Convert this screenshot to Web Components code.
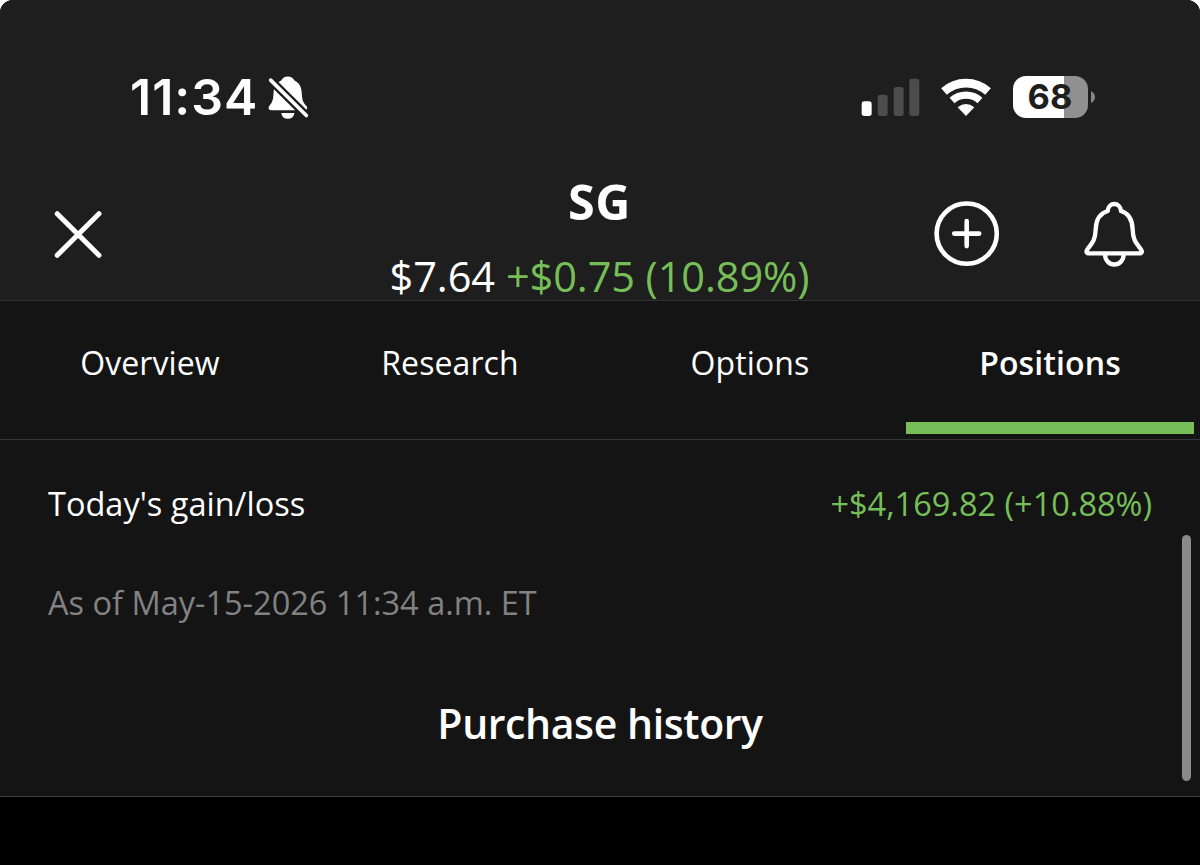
<!DOCTYPE html>
<html lang="en">
<head>
<meta charset="utf-8">
<title>SG Positions</title>
<style>
  body {
    margin: 0;
    background: #fff;
    font-family: 'Open Sans', 'Noto Sans', sans-serif;
    color: #fff;
  }
</style>
</head>
<body>
<phone-screen>
  <status-bar slot="header" time="11:34" battery="68"></status-bar>
  <quote-header slot="header">
    <span slot="symbol">SG</span>
    <span slot="price">$7.64</span>
    <span slot="change">+$0.75 (10.89%)</span>
  </quote-header>
  <nav-tabs slot="tabs">
    <nav-tab>Overview</nav-tab>
    <nav-tab>Research</nav-tab>
    <nav-tab>Options</nav-tab>
    <nav-tab selected>Positions</nav-tab>
  </nav-tabs>
  <position-panel>
    <detail-row>
      <span slot="label">Today's gain/loss</span>
      <span slot="value">+$4,169.82 (+10.88%)</span>
    </detail-row>
    <span slot="updated">As of May-15-2026 11:34 a.m. ET</span>
    <span slot="title">Purchase history</span>
  </position-panel>
</phone-screen>

<script>
class PhoneScreen extends HTMLElement {
  connectedCallback() {
    if (this.shadowRoot) return;
    this.attachShadow({ mode: 'open' }).innerHTML = `
      <style>
        :host {
          --green: #76bf58;
          --top: #1e1e1e;
          display: flex;
          flex-direction: column;
          width: 1200px;
          height: 865px;
          overflow: hidden;
          border-radius: 13px 13px 0 0;
          background: #000;
        }
        header {
          box-sizing: border-box;
          height: 301px;
          padding-top: 64px;
          background: var(--top);
          border-bottom: 1px solid #313131;
        }
      </style>
      <header><slot name="header"></slot></header>
      <slot name="tabs"></slot>
      <slot></slot>
    `;
  }
}

class StatusBar extends HTMLElement {
  connectedCallback() {
    if (this.shadowRoot) return;
    this.attachShadow({ mode: 'open' }).innerHTML = `
      <style>
        :host {
          display: flex;
          align-items: center;
          justify-content: space-between;
          height: 66px;
          padding: 0 105px 0 130px;
          font-family: Inter, 'Liberation Sans', sans-serif;
        }
        .side { display: flex; align-items: center; }
        svg { display: block; flex: none; }
        .time {
          width: 136px;
          font-size: 50px;
          font-weight: 600;
          line-height: 66px;
          letter-spacing: 1px;
        }
        .wifi { margin: 0 22px 0 20px; }
        .battery {
          width: 75px;
          height: 42px;
          border-radius: 13px;
          background: linear-gradient(90deg, #fff 68%, #909090 68%);
          color: #1e1e1e;
          font-size: 34.5px;
          font-weight: 700;
          line-height: 42px;
          text-align: center;
          text-indent: -1px;
        }
        .nub { margin-left: 3px; }
      </style>
      <div class="side">
        <span class="time">${this.getAttribute('time')}</span>
        <svg width="45" height="48" viewBox="440 40 136 144" aria-hidden="true">
          <path fill="#fff" d="M506 50C497 50 490 54 486 62C471 69 464 80 463 97C462 121 459 128 451 138C445 146 448 152 456 152H556C565 152 567 145 561 138C552 128 549 121 548 99C547 80 540 69 526 62C522 54 515 50 506 50Z"/>
          <path fill="#fff" d="M486 160H526C524 172 517 178 506 178S488 172 486 160Z"/>
          <path stroke="#1e1e1e" stroke-width="25" d="M449 56 572 178"/>
          <path stroke="#fff" stroke-width="11" stroke-linecap="round" d="M454 61 562 168"/>
        </svg>
      </div>
      <div class="side">
        <svg width="60" height="40" viewBox="30 35 180 120" fill="#4c4c4c" aria-hidden="true">
          <rect x="32" y="108" width="30" height="44" rx="8" fill="#fff"/>
          <rect x="80" y="88" width="30" height="64" rx="8"/>
          <rect x="128" y="65" width="30" height="87" rx="8"/>
          <rect x="175" y="40" width="30" height="112" rx="8"/>
        </svg>
        <svg class="wifi" width="50" height="40" viewBox="272 35 150 120" fill="none" stroke="#fff" aria-hidden="true">
          <path stroke-width="26" d="M281 78.4A99 99 0 0 1 413 78.4"/>
          <path stroke-width="22" d="M305 105.2A63 63 0 0 1 389 105.2"/>
          <path fill="#fff" stroke="none" d="M347 152 322 126Q347 106 372 126Z"/>
        </svg>
        <div class="battery">${this.getAttribute('battery')}</div>
        <svg class="nub" width="4" height="12" viewBox="0 0 4 12" aria-hidden="true">
          <path fill="#858585" d="M0 0Q4 2 4 6T0 12Z"/>
        </svg>
      </div>
    `;
  }
}

class QuoteHeader extends HTMLElement {
  connectedCallback() {
    if (this.shadowRoot) return;
    this.attachShadow({ mode: 'open' }).innerHTML = `
      <style>
        :host {
          display: grid;
          grid-template-columns: 1fr auto 1fr;
          height: 170px;
          padding: 0 55px 0 54px;
        }
        .icons {
          display: flex;
          align-items: center;
          height: 208px;
        }
        .end { justify-content: flex-end; gap: 83px; }
        svg { display: block; fill: none; stroke: #fff; stroke-linecap: round; }
        .quote {
          display: flex;
          flex-direction: column;
          align-items: center;
          gap: 25px;
          padding-top: 46px;
          line-height: 50px;
          white-space: nowrap;
        }
        .symbol { font-size: 48.5px; font-weight: 700; letter-spacing: 0.6px; }
        .line {
          display: flex;
          gap: 11px;
          font-size: 41.5px;
          letter-spacing: -0.1px;
        }
        .change { color: var(--green); }
      </style>
      <div class="icons">
        <svg width="48" height="48" viewBox="0 0 48 48" stroke-width="5" aria-label="Close">
          <path d="M3.2 3.7 45 45.3M45 3.7 3.2 45.3"/>
        </svg>
      </div>
      <div class="quote">
        <div class="symbol"><slot name="symbol"></slot></div>
        <div class="line">
          <slot name="price"></slot>
          <div class="change"><slot name="change"></slot></div>
        </div>
      </div>
      <div class="icons end">
        <svg width="66" height="66" viewBox="0 0 66 66" stroke-width="4.6" aria-label="Add">
          <circle cx="32.7" cy="32.6" r="30.1"/>
          <path d="M32.7 20.1v25M20.2 32.6h25"/>
        </svg>
        <svg width="62" height="68" viewBox="490 30 186 204" stroke-width="13" stroke-linejoin="round" aria-label="Alerts">
          <path d="M564 63C566 35 602 35 604 63C628 70 638 90 639 118C640 146 645 155 664 178C669 186 667 190 660 190H507C500 190 498 186 503 178C522 155 527 146 528 118C529 90 540 70 564 63Z"/>
          <path d="M556 192C556 234 612 234 612 192"/>
        </svg>
      </div>
    `;
  }
}

class NavTabs extends HTMLElement {
  connectedCallback() {
    if (this.shadowRoot) return;
    this.attachShadow({ mode: 'open' }).innerHTML = `
      <style>
        :host {
          display: grid;
          grid-template-columns: repeat(4, 1fr);
          height: 138px;
          background: #141414;
          border-bottom: 1px solid #38373c;
        }
      </style>
      <slot></slot>
    `;
  }
}

class NavTab extends HTMLElement {
  connectedCallback() {
    if (this.shadowRoot) return;
    this.attachShadow({ mode: 'open' }).innerHTML = `
      <style>
        :host {
          display: flex;
          flex-direction: column;
          justify-content: space-between;
          padding: 37px 6px 5px;
          font-size: 32px;
          line-height: 50px;
          letter-spacing: 0.1px;
          text-align: center;
        }
        :host([selected]) { font-weight: 600; }
        .bar { height: 12px; }
        :host([selected]) .bar { background: var(--green); }
      </style>
      <div><slot></slot></div>
      <div class="bar"></div>
    `;
  }
}

class PositionPanel extends HTMLElement {
  connectedCallback() {
    if (this.shadowRoot) return;
    this.attachShadow({ mode: 'open' }).innerHTML = `
      <style>
        :host {
          position: relative;
          display: flex;
          flex-direction: column;
          box-sizing: border-box;
          height: 357px;
          padding: 39px 48px 0;
          background: #141414;
          border-bottom: 1px solid #3c3c3e;
          font-size: 32.5px;
          line-height: 50px;
        }
        .updated {
          margin-top: 49px;
          color: #828282;
        }
        .title {
          margin-top: 70px;
          font-size: 41px;
          font-weight: 600;
          letter-spacing: -0.4px;
          text-align: center;
        }
        /* scroll thumb floats over the content */
        .thumb {
          position: absolute;
          top: 95px;
          right: 9px;
          width: 9px;
          height: 246px;
          border-radius: 5px;
          background: #8a8a8a;
        }
      </style>
      <slot></slot>
      <div class="updated"><slot name="updated"></slot></div>
      <div class="title"><slot name="title"></slot></div>
      <div class="thumb"></div>
    `;
  }
}

class DetailRow extends HTMLElement {
  connectedCallback() {
    if (this.shadowRoot) return;
    this.attachShadow({ mode: 'open' }).innerHTML = `
      <style>
        :host {
          display: flex;
          justify-content: space-between;
        }
        .value { color: var(--green); }
      </style>
      <div><slot name="label"></slot></div>
      <div class="value"><slot name="value"></slot></div>
    `;
  }
}

customElements.define('phone-screen', PhoneScreen);
customElements.define('status-bar', StatusBar);
customElements.define('quote-header', QuoteHeader);
customElements.define('nav-tabs', NavTabs);
customElements.define('nav-tab', NavTab);
customElements.define('position-panel', PositionPanel);
customElements.define('detail-row', DetailRow);
</script>
</body>
</html>
